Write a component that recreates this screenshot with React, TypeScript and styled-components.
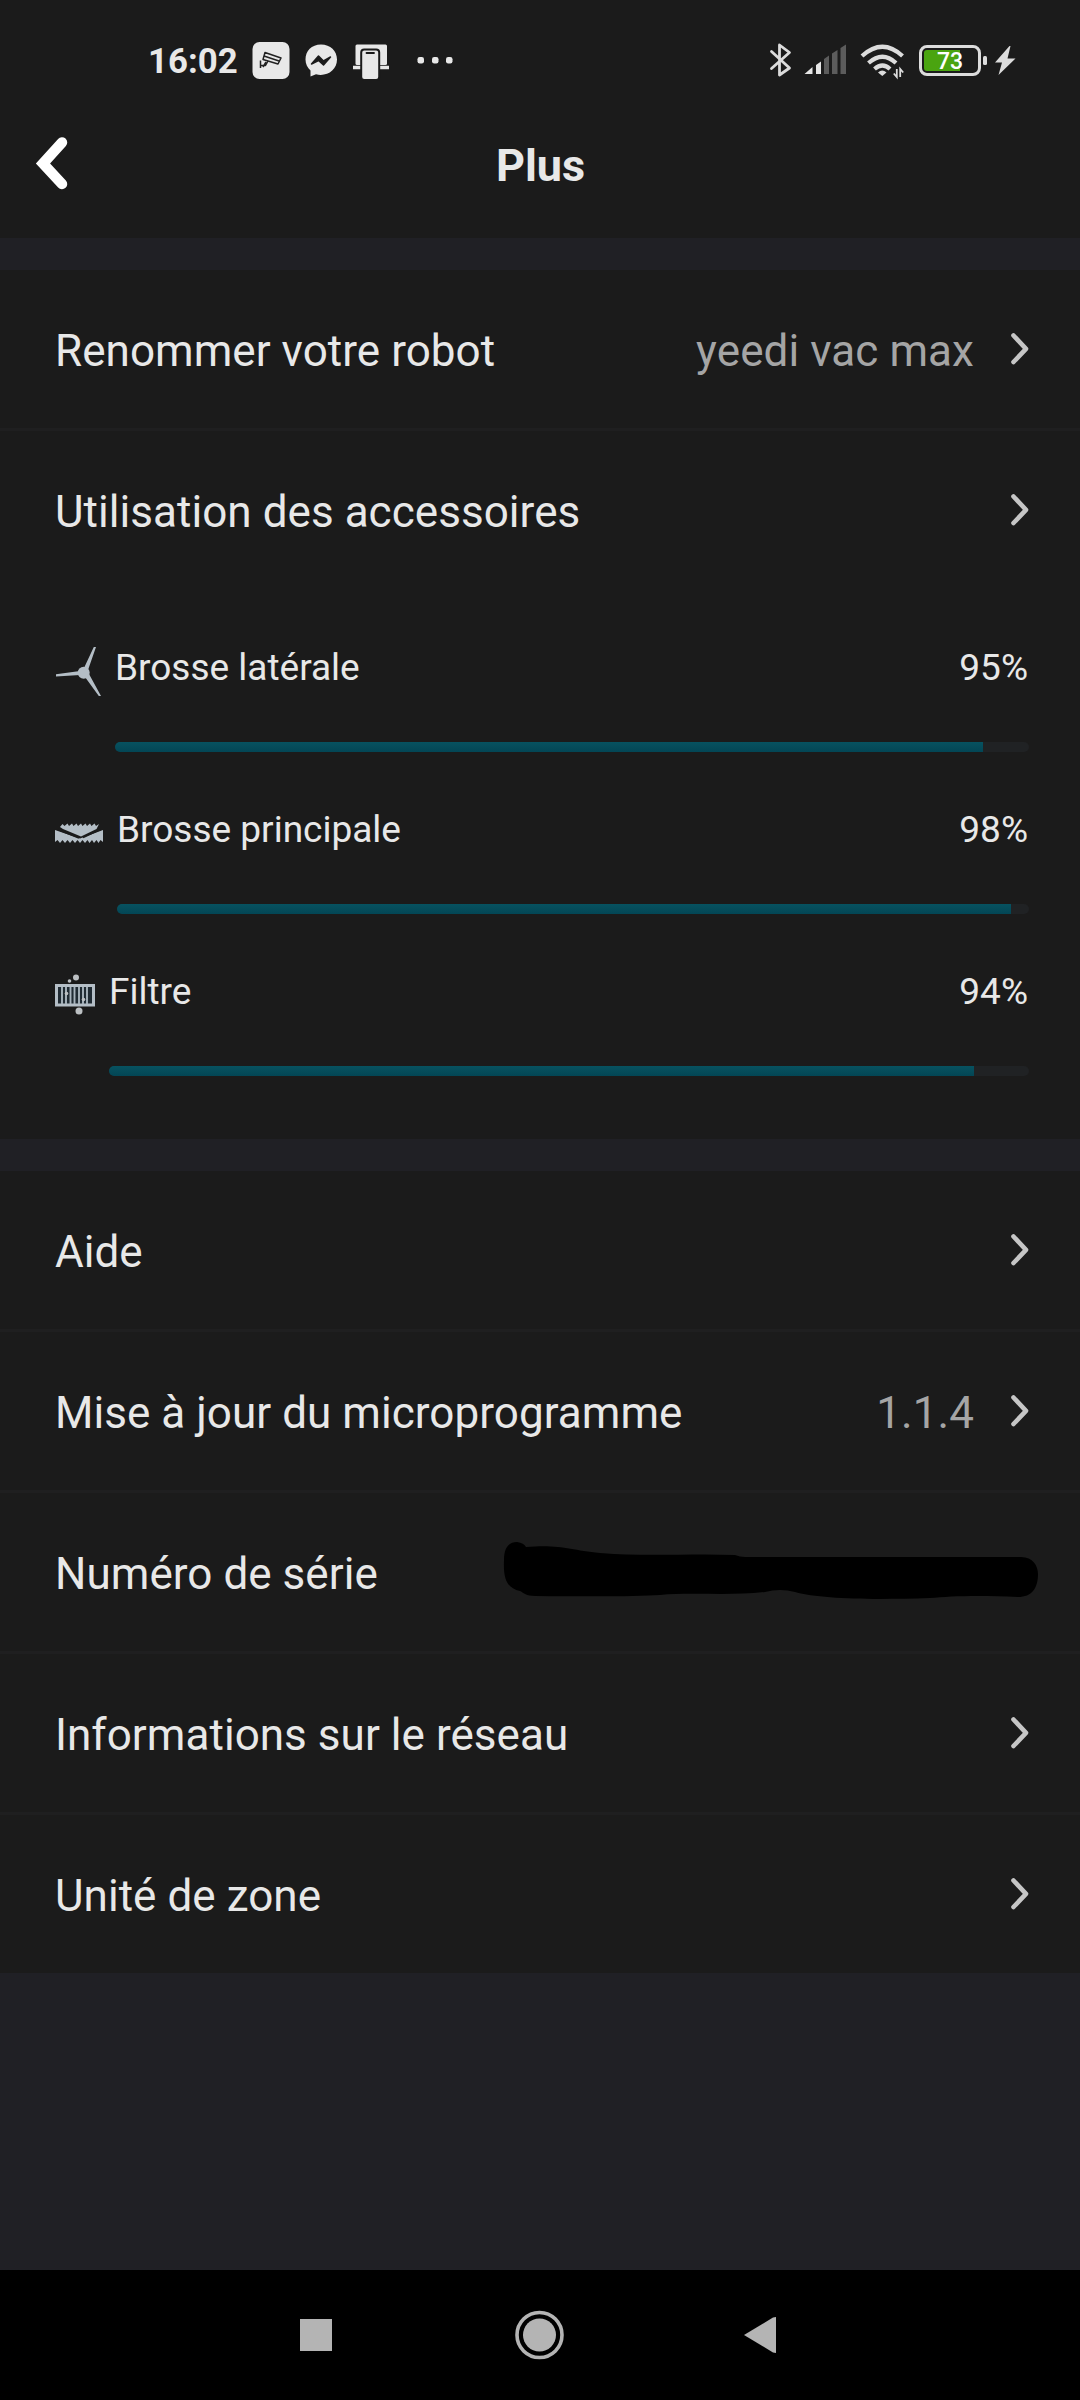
import React from "react";
import styled, { createGlobalStyle } from "styled-components";

const Global = createGlobalStyle`
  * { box-sizing: border-box; }
  body { margin: 0; background: #202025; }
`;

const Screen = styled.div`
  width: 1080px;
  height: 2400px;
  display: flex;
  flex-direction: column;
  background: #202025;
  color: #e8e8e8;
  font-family: Roboto, "Noto Sans", sans-serif;
  overflow: hidden;
`;

const StatusBar = styled.div`
  height: 100px;
  flex: none;
  display: flex;
  justify-content: space-between;
  align-items: flex-start;
  padding: 36px 62px 0 148px;
  background: #1b1b1b;
`;

const StatusGroup = styled.div<{ $gap?: number }>`
  display: flex;
  align-items: center;
  height: 48px;
  gap: ${(p) => p.$gap ?? 0}px;
`;

const Clock = styled.span`
  width: 104px;
  font-size: 34.8px;
  line-height: 48px;
  font-weight: 700;
  padding-top: 2px;
`;

const TitleBar = styled.header`
  height: 138px;
  flex: none;
  display: grid;
  grid-template-columns: 100px 1fr 100px;
  align-items: start;
  background: #1b1b1b;
`;

const BackButton = styled.button`
  border: 0;
  padding: 32px 0 0 29px;
  background: none;
  display: flex;
`;

const Title = styled.h1`
  margin: 0;
  padding: 39px 0 0 1px;
  text-align: center;
  font-size: 45px;
  line-height: 54px;
  font-weight: 700;
`;

const Section = styled.section<{ $top: number; $height: number }>`
  margin-top: ${(p) => p.$top}px;
  height: ${(p) => p.$height}px;
  flex: none;
  display: flex;
  flex-direction: column;
  background: #1b1b1b;
`;

const Row = styled.div<{ $divider?: boolean; $height?: number }>`
  height: ${(p) => p.$height ?? 161}px;
  flex: none;
  display: flex;
  align-items: center;
  padding: 0 50px 0 55px;
  border-bottom: ${(p) => (p.$divider ? "3px solid #1f1f20" : "0")};
`;

const Label = styled.span`
  flex: 1;
  font-size: 44px;
  line-height: 52px;
  letter-spacing: 0.05px;
  padding-top: 4px;
  white-space: nowrap;
`;

const Value = styled.span`
  margin-right: 36px;
  font-size: 44px;
  line-height: 52px;
  letter-spacing: 0.08px;
  padding-top: 4px;
  color: #a5a5a5;
`;

const ChevronSvg = styled.svg`
  display: block;
  flex: none;
`;

const Redaction = styled.svg`
  display: block;
  flex: none;
  margin: 0 -9px 2px 0;
`;

const Accessories = styled.div`
  padding: 47px 51px 0 54px;
  display: flex;
  flex-direction: column;
`;

const Accessory = styled.div`
  height: 162px;
  display: flex;
`;

const AccessoryIcon = styled.div<{ $width: number }>`
  width: ${(p) => p.$width}px;
  flex: none;
  padding-top: 10px;
`;

const AccessoryBody = styled.div`
  flex: 1;
  display: flex;
  flex-direction: column;
`;

const AccessoryText = styled.div`
  display: flex;
  justify-content: space-between;
  height: 107px;
  padding: 11px 1px 0 0;
  font-size: 37px;
  line-height: 44px;
`;

const Track = styled.div`
  height: 10px;
  border-radius: 5px;
  background: #202224;
  overflow: hidden;
`;

const Fill = styled.div`
  height: 10px;
  background: linear-gradient(#075260, #034655);
`;

const NavBar = styled.nav`
  height: 130px;
  flex: none;
  margin-top: auto;
  display: flex;
  justify-content: space-between;
  align-items: center;
  padding: 0 304px 0 300px;
  background: #000;
`;

const Chevron = () => (
  <ChevronSvg width="20" height="34" viewBox="0 0 20 34">
    <path d="M3.5 3.5L16 16.8L3.5 30" fill="none" stroke="#c6c6c6" strokeWidth="4.6" strokeLinecap="round" strokeLinejoin="round" />
  </ChevronSvg>
);

const LeftIcons = () => (
  <svg width="210" height="48" viewBox="252 36 210 48">
    <rect x="252.5" y="42" width="37" height="37" rx="7" fill="#e8e8e8" />
    <g fill="none" stroke="#222" strokeWidth="1.5" strokeLinejoin="round">
      <path d="M265 52.500L281 58L278 64L263 59.500Z" />
      <path d="M264 56L279 61M268 61L265.500 65.500H260.500M260.500 60.500V68M263 67L266 62" />
    </g>
    <path d="M321 44.500C311.500 44.500 305.500 51 305.500 59.500C305.500 64 307.500 68 310.500 70.500V76.500L316 74.300C327 77 337 70 337 59.500C337 51 330.500 44.500 321 44.500Z" fill="#e8e8e8" />
    <path d="M311.500 64L318.500 56L323.500 61L330.500 57L323.500 65L318.500 60.500Z" fill="#1b1b1b" stroke="#1b1b1b" strokeWidth="1.500" strokeLinejoin="round" />
    <rect x="355.500" y="44.500" width="31.500" height="20.500" rx="1.500" fill="#e8e8e8" />
    <path d="M353 67.500H389" stroke="#e8e8e8" strokeWidth="3.600" />
    <rect x="361.200" y="49.500" width="18" height="30.500" rx="3" fill="#e8e8e8" stroke="#1b1b1b" strokeWidth="2" />
    <path d="M366.500 53H374" stroke="#1b1b1b" strokeWidth="1.800" strokeLinecap="round" />
    <g fill="#e8e8e8">
      <rect x="417.500" y="57" width="6.500" height="6.500" rx="2.200" />
      <rect x="432" y="57" width="6.500" height="6.500" rx="2.200" />
      <rect x="446" y="57" width="6.500" height="6.500" rx="2.200" />
    </g>
  </svg>
);

const SignalIcons = () => (
  <svg width="146" height="48" viewBox="768 36 146 48">
    <path d="M771.500 51.500L789.500 68L779.500 75V45L789.500 52.500L771.500 68.500" fill="none" stroke="#dcdcdc" strokeWidth="2.800" strokeLinejoin="round" strokeLinecap="round" />
    <path d="M804.500 74L812.500 67V74ZM816 74V65L821 61.500V74Z" fill="#e6e6e6" />
    <path d="M824 74V59L829 55.500V74ZM832 74V53.500L837.500 50V74ZM840.500 74V48L846 44.500V74Z" fill="#5c5c5c" />
    <g fill="none" stroke="#dcdcdc" strokeWidth="4.200">
      <path d="M862 56Q882.500 37.500 902.500 56" />
      <path d="M868.500 63Q882.500 50.500 896 63" />
      <path d="M874.500 69Q882.500 62 890 69" />
    </g>
    <path d="M878 72.500Q882.300 68.500 886.500 72.500L882.300 76Z" fill="#dcdcdc" />
    <path d="M896.800 69V77L893.800 73.500M900.200 77V69L903.200 72.500" fill="none" stroke="#dcdcdc" strokeWidth="1.800" />
  </svg>
);

const BatteryWrap = styled.div`
  display: flex;
  align-items: center;
`;

const BatteryShell = styled.div`
  width: 62px;
  height: 31px;
  border: 3.5px solid #dcdcdc;
  border-radius: 8px;
  padding: 2px;
`;

const BatteryLevel = styled.div`
  height: 100%;
  background: linear-gradient(90deg, #4aa410 70%, #1b1b1b 70%);
  border-radius: 3px;
  color: #fff;
  font-size: 23px;
  line-height: 23px;
  font-weight: 500;
  text-align: center;
`;

const Battery = () => (
  <BatteryWrap>
    <BatteryShell>
      <BatteryLevel>73</BatteryLevel>
    </BatteryShell>
    <svg width="37" height="48" viewBox="981 36 37 48">
      <rect x="983" y="56" width="4" height="9" rx="1.500" fill="#dcdcdc" />
      <path d="M1009.500 46L995 62.500H1002L998.500 75L1015.500 58.500H1007.500L1010.500 46Z" fill="#dcdcdc" />
    </svg>
  </BatteryWrap>
);

const SideBrush = () => (
  <svg width="50" height="54" viewBox="0 0 50 54">
    <g fill="#b4bec6">
      <circle cx="29.700" cy="27.700" r="6" />
      <path d="M30 23L39.800 2H42L34 25ZM26 26L2 29.300V31.500L26 30ZM31 32L44.800 51H47L35 29Z" />
    </g>
  </svg>
);

const MainBrush = () => (
  <svg width="50" height="54" viewBox="0 0 50 54">
    <g fill="#b4bec6">
      <path d="M6 20L8.500 17L10.500 19L13.500 16.500L15 19L18 16.500L19.500 19L22.500 16.500L24 19L27 16.500L28.500 19L31.500 16.500L33 19L36 16.500L37.500 19L40.500 16.500L42 19L45 17L42.500 22L27 29.500L9 22Z" />
      <path d="M1 23L14 27.500L26 31.500L37 27.500L49 23V35L46.500 33L44.500 36L42.500 33L40 36L38 33L35.500 36L33.500 33L31 36L28.500 33L26 36L23.500 33L21 36L18.500 33L16 36L13.500 33L11 36L8.500 33L6 36L3.500 33L1 35Z" />
    </g>
    <path d="M4 22.500L25 31M46 22.500L29 30.500" stroke="#1b1b1b" strokeWidth="1.800" />
  </svg>
);

const Filter = () => (
  <svg width="50" height="54" viewBox="0 0 50 54">
    <rect x="2.500" y="16.500" width="37" height="19.500" fill="#202b33" stroke="#b4bec6" strokeWidth="3" />
    <path d="M8 18V35M12 18V35M16.500 18V35M20.500 18V35M25 18V35M29 18V35M33 18V35" stroke="#a8b4bd" strokeWidth="1.900" />
    <g fill="#bcc0c3">
      <circle cx="22" cy="8.500" r="3" />
      <circle cx="15.500" cy="12" r="1.800" />
      <circle cx="25" cy="42" r="3.500" />
      <circle cx="12.500" cy="24.500" r="1.800" />
      <circle cx="29.500" cy="30.500" r="1.800" />
    </g>
  </svg>
);

const accessories = [
  { name: "Brosse latérale", value: 95, width: 61, icon: <SideBrush /> },
  { name: "Brosse principale", value: 98, width: 63, icon: <MainBrush /> },
  { name: "Filtre", value: 94, width: 55, icon: <Filter /> },
];

export default function App() {
  return (
    <Screen>
      <Global />
      <StatusBar>
        <StatusGroup>
          <Clock>16:02</Clock>
          <LeftIcons />
        </StatusGroup>
        <StatusGroup $gap={5}>
          <SignalIcons />
          <Battery />
        </StatusGroup>
      </StatusBar>
      <TitleBar>
        <BackButton aria-label="Retour">
          <svg width="44" height="64" viewBox="30 132 44 64">
            <path d="M63 142.500L44 163.500L63 184" fill="none" stroke="#fff" strokeWidth="10.500" strokeLinecap="round" strokeLinejoin="miter" />
          </svg>
        </BackButton>
        <Title>Plus</Title>
      </TitleBar>
      <Section $top={32} $height={869}>
        <Row $divider>
          <Label>Renommer votre robot</Label>
          <Value>yeedi vac max</Value>
          <Chevron />
        </Row>
        <Row $height={157}>
          <Label>Utilisation des accessoires</Label>
          <Chevron />
        </Row>
        <Accessories>
          {accessories.map((a) => (
            <Accessory key={a.name}>
              <AccessoryIcon $width={a.width}>{a.icon}</AccessoryIcon>
              <AccessoryBody>
                <AccessoryText>
                  <span>{a.name}</span>
                  <span>{a.value}%</span>
                </AccessoryText>
                <Track>
                  <Fill style={{ width: `${a.value}%` }} />
                </Track>
              </AccessoryBody>
            </Accessory>
          ))}
        </Accessories>
      </Section>
      <Section $top={32} $height={802}>
        <Row $divider>
          <Label>Aide</Label>
          <Chevron />
        </Row>
        <Row $divider>
          <Label>Mise à jour du microprogramme</Label>
          <Value>1.1.4</Value>
          <Chevron />
        </Row>
        <Row $divider>
          <Label>Numéro de série</Label>
          <Redaction width="536" height="60" viewBox="503 1541 536 60">
            <path d="M504 1560C504 1546 510 1542 517 1542Q524 1543 526 1547C560 1544 570 1550 600 1553C650 1557 690 1553 735 1555Q740 1557 745 1557H1021C1033 1557 1038 1566 1038 1574C1038 1588 1032 1597 1018 1597C980 1595 950 1596 930 1598C870 1600 820 1599 795 1592Q780 1588 765 1592C730 1596 690 1592 660 1595Q630 1597 535 1596C526 1596 524 1593 520 1591C508 1588 503 1581 504 1560Z" fill="#000" />
          </Redaction>
        </Row>
        <Row $divider>
          <Label>Informations sur le réseau</Label>
          <Chevron />
        </Row>
        <Row $height={158}>
          <Label>Unité de zone</Label>
          <Chevron />
        </Row>
      </Section>
      <NavBar>
        <svg width="32" height="32"><rect width="32" height="32" fill="#b4b4b4" /></svg>
        <svg width="52" height="50" viewBox="0 0 52 50">
          <circle cx="27.500" cy="25" r="22.500" fill="none" stroke="#b4b4b4" strokeWidth="3.600" />
          <circle cx="27.500" cy="25" r="16.500" fill="#b4b4b4" />
        </svg>
        <svg width="32" height="36" viewBox="0 0 32 36"><path d="M0 18L29 0.500L32 0V36L29 35.500Z" fill="#b4b4b4" /></svg>
      </NavBar>
    </Screen>
  );
}
